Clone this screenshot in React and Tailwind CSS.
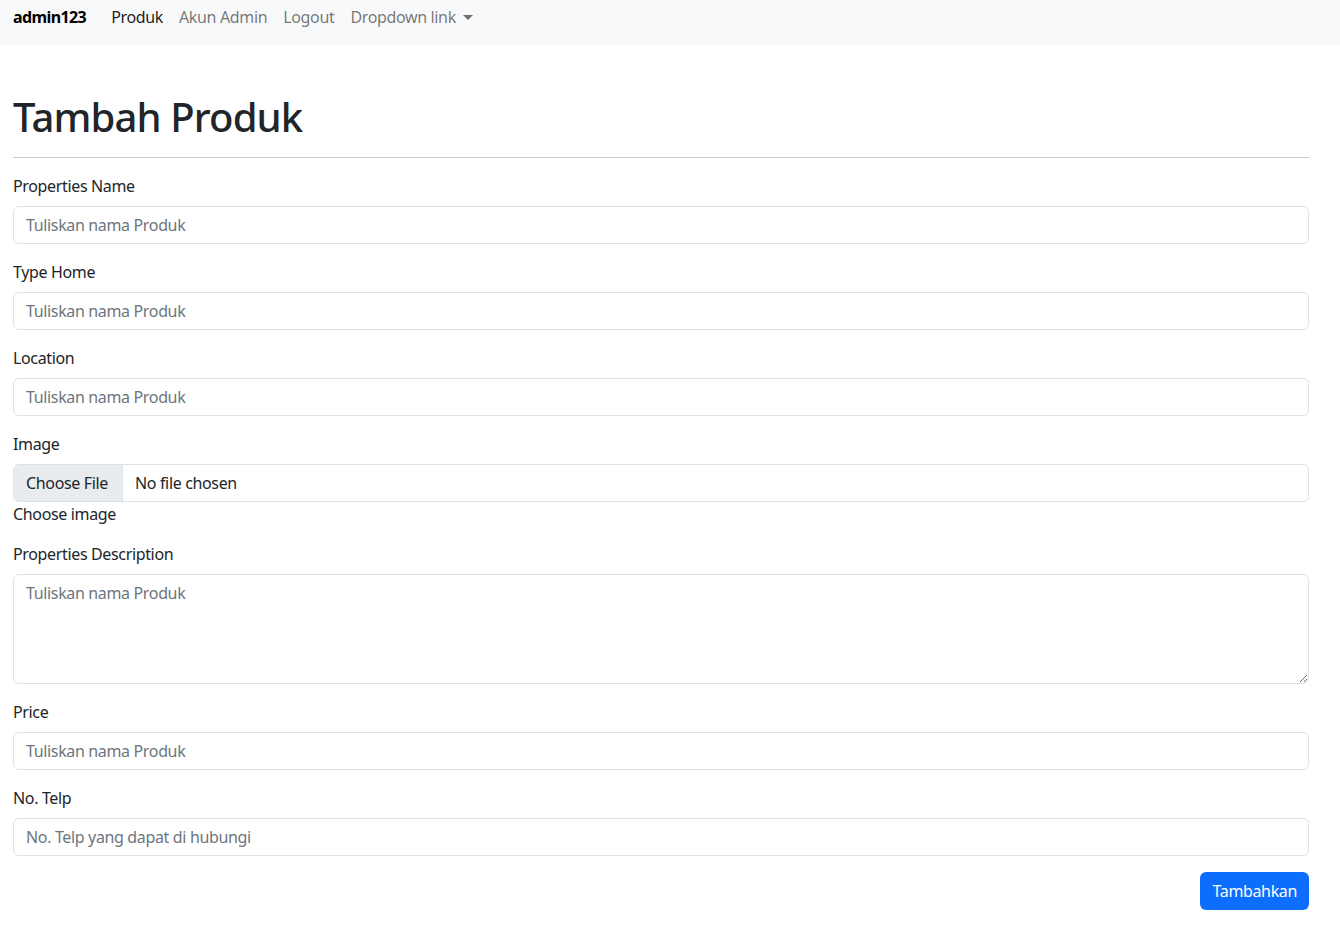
import React from 'react';

const fieldClass =
    "block w-full h-[38px] px-3 rounded-[6px] border border-[#dee2e6] bg-white text-[16px] text-[#212529] tracking-[-0.35px] placeholder:text-[#6c757d] outline-none";

const Field = ({ label, placeholder }) => (
    <div className="mb-4">
        <label className="block mb-2 leading-6">{label}</label>
        <input type="text" placeholder={placeholder} className={fieldClass} />
    </div>
);

const App = () => {
    return (
        <div className="min-h-[940px] bg-white text-[#212529] text-[16px] leading-6 tracking-[-0.35px] font-['Noto_Sans',sans-serif]">
            <nav className="h-[45px] bg-[#f8f9fa] flex items-start pt-[5px] pl-[13px]">
                <span className="font-bold text-black mr-[17px] tracking-[-0.6px]">admin123</span>
                <ul className="flex">
                    <li className="px-2 text-black/90">Produk</li>
                    <li className="px-2 text-black/55">Akun Admin</li>
                    <li className="px-2 text-black/55">Logout</li>
                    <li className="px-2 text-black/55 flex items-center">
                        Dropdown link
                        <span className="ml-[7px] w-0 h-0 border-l-[5px] border-r-[5px] border-t-[5px] border-l-transparent border-r-transparent border-t-black/55"></span>
                    </li>
                </ul>
            </nav>

            <div className="ml-[13px] w-[1296px]">
                <h1 className="mt-12 text-[40px] leading-[48px] font-medium tracking-[-0.85px]">Tambah Produk</h1>
                <hr className="my-4 border-t border-[#c8c9ca]" />

                <form>
                    <Field label="Properties Name" placeholder="Tuliskan nama Produk" />
                    <Field label="Type Home" placeholder="Tuliskan nama Produk" />
                    <Field label="Location" placeholder="Tuliskan nama Produk" />

                    <div className="mb-4">
                        <label className="block mb-2 leading-6">Image</label>
                        <div className="flex h-[38px] rounded-[6px] border border-[#dee2e6] overflow-hidden">
                            <div className="w-[109px] shrink-0 whitespace-nowrap bg-[#e9ecef] border-r border-[#dee2e6] flex items-center px-3">
                                Choose File
                            </div>
                            <div className="flex items-center px-3 whitespace-nowrap">No file chosen</div>
                        </div>
                        <div className="leading-6">Choose image</div>
                    </div>

                    <div className="mb-4">
                        <label className="block mb-2 leading-6">Properties Description</label>
                        <textarea
                            placeholder="Tuliskan nama Produk"
                            className="block w-full h-[110px] px-3 py-[6px] rounded-[6px] border border-[#dee2e6] text-[16px] leading-6 tracking-[-0.35px] placeholder:text-[#6c757d] outline-none"
                        ></textarea>
                    </div>

                    <Field label="Price" placeholder="Tuliskan nama Produk" />
                    <Field label="No. Telp" placeholder="No. Telp yang dapat di hubungi" />

                    <div className="flex justify-end">
                        <button
                            type="button"
                            className="h-[38px] px-3 rounded-[6px] bg-[#0d6efd] text-white tracking-[-0.35px]"
                        >
                            Tambahkan
                        </button>
                    </div>
                </form>
            </div>
        </div>
    );
};

export default App;
